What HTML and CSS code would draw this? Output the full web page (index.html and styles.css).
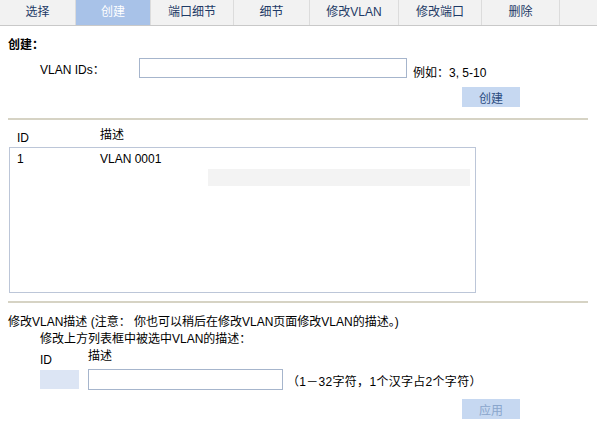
FILE: index.html
```html
<!DOCTYPE html>
<html lang="zh-CN">
<head>
    <meta charset="UTF-8">
    <title>VLAN - 创建</title>
    <link rel="stylesheet" href="styles.css">
</head>
<body>
    <div class="tabs">
        <div class="tab w76">选择</div>
        <div class="tab w75 active">创建</div>
        <div class="tab w83">端口细节</div>
        <div class="tab w76">细节</div>
        <div class="tab w89">修改VLAN</div>
        <div class="tab w83">修改端口</div>
        <div class="tab w78">删除</div>
        <div class="tab last"></div>
    </div>

    <div class="section-title">创建：</div>
    <div class="form-row">
        <label class="ids-label" for="vlanIds">VLAN IDs：</label>
        <input type="text" id="vlanIds" class="ids-input">
        <span class="hint">例如：3, 5-10</span>
    </div>
    <div class="btn-row">
        <button class="btn">创建</button>
    </div>

    <div class="sep sep-top"></div>

    <div class="list-head">
        <span class="col-id">ID</span>
        <span class="col-desc">描述</span>
    </div>
    <div class="list-box">
        <div class="list-row">
            <span class="col-id">1</span>
            <span class="col-desc">VLAN 0001</span>
        </div>
        <div class="list-band"></div>
    </div>

    <div class="sep sep-bottom"></div>

    <div class="note">修改VLAN描述 (注意： 你也可以稍后在修改VLAN页面修改VLAN的描述。)</div>
    <div class="sub-note">修改上方列表框中被选中VLAN的描述：</div>
    <div class="edit-head">
        <span class="edit-id">ID</span>
        <span>描述</span>
    </div>
    <div class="edit-row">
        <div class="id-box"></div>
        <input type="text" class="desc-input">
        <span class="desc-hint">（1－32字符，1个汉字占2个字符）</span>
    </div>
    <div class="btn-row apply-row">
        <button class="btn" disabled>应用</button>
    </div>
</body>
</html>
```

FILE: styles.css
```css
body {
    margin: 0;
    font-family: "Liberation Sans", "Noto Sans CJK SC", sans-serif;
    font-size: 12px;
    color: #000;
    background: #fff;
}
.tabs {
    display: flex;
    height: 25px;
    background: #f2f2f2;
    border-bottom: 1px solid #c9c9c9;
}
.tab {
    box-sizing: border-box;
    line-height: 25px;
    text-align: center;
    color: #1e3a66;
    border-right: 1px solid #dcdcdc;
}
.tab.active {
    background: #a8c2e8;
    color: #fff;
}
.tab.last {
    flex: 1;
    border-right: none;
}
.w75 { width: 75px; }
.w76 { width: 76px; }
.w78 { width: 78px; }
.w83 { width: 83px; }
.w89 { width: 89px; }

.section-title {
    margin: 12px 0 0 8px;
    line-height: 14px;
    font-weight: bold;
}
.form-row {
    display: flex;
    align-items: center;
    margin-top: 6px;
    height: 20px;
}
.ids-label {
    width: 99px;
    margin-left: 40px;
}
input[type="text"] {
    box-sizing: border-box;
    height: 20px;
    margin: 0;
    border: 1px solid #a6b5cc;
    background: #fff;
    font: inherit;
}
.ids-input {
    width: 268px;
}
.hint {
    margin: 6px 0 0 6px;
}
.btn-row {
    margin: 9px 0 0 462px;
}
.btn {
    width: 58px;
    height: 20px;
    padding: 0;
    border: none;
    background: #c6d8f1;
    color: #2b4c80;
    font: inherit;
}
.btn:disabled {
    color: #8aa6cc;
}
.sep {
    width: 580px;
    margin-left: 8px;
    border-top: 2px solid #d6d3c4;
}
.sep-top {
    margin-top: 11px;
}
.list-head {
    display: flex;
    margin-top: 8px;
    line-height: 14px;
}
.col-id {
    width: 83px;
    margin-left: 17px;
}
.list-head .col-id {
    padding-top: 3px;
}
.list-box {
    box-sizing: border-box;
    width: 467px;
    height: 146px;
    margin: 2px 0 0 9px;
    border: 1px solid #bcc6d8;
}
.list-row {
    display: flex;
    margin-top: 4px;
    line-height: 14px;
}
.list-row .col-id {
    width: 83px;
    margin-left: 7px;
}
.list-band {
    width: 262px;
    height: 17px;
    margin: 3px 0 0 198px;
    background: #f3f3f3;
}
.sep-bottom {
    margin-top: 8px;
}
.note {
    margin: 12px 0 0 8px;
    line-height: 14px;
}
.sub-note {
    margin: 3px 0 0 40px;
    line-height: 14px;
}
.edit-head {
    display: flex;
    margin: 3px 0 0 40px;
    line-height: 14px;
}
.edit-id {
    width: 48px;
    padding-top: 4px;
}
.edit-row {
    display: flex;
    align-items: center;
    margin: 1px 0 0 40px;
    height: 22px;
}
.id-box {
    width: 39px;
    height: 19px;
    margin-right: 9px;
    background: #dce5f4;
}
.desc-input {
    width: 195px;
    height: 21px !important;
}
.desc-hint {
    margin: 3px 0 0 4px;
    letter-spacing: 0.3px;
}
.apply-row {
    margin-top: 9px;
}
```
